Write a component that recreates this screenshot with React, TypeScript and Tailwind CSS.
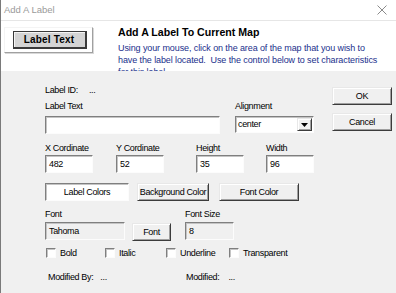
import { ReactNode } from 'react';

const sunken =
  'border border-t-[#7f7f7f] border-l-[#7f7f7f] border-r-[#fcfcfc] border-b-[#fcfcfc] shadow-[inset_1px_1px_0_#c4c4c4]';
const raised =
  'border border-t-[#e8e8e8] border-l-[#e8e8e8] border-r-[#3c3c3c] border-b-[#3c3c3c] bg-[#f0f0f0] shadow-[inset_1px_1px_0_#ffffff,inset_-1px_-1px_0_#a0a0a0]';

function Field({ value, className = '', bg = 'bg-white' }: { value?: string; className?: string; bg?: string }) {
  return (
    <div className={`${sunken} ${bg} h-[18px] flex items-center pl-[3px] ${className}`}>
      <span className="leading-none">{value}</span>
    </div>
  );
}

function Btn({ children, className = '' }: { children: ReactNode; className?: string }) {
  return (
    <div className={`${raised} h-[18px] flex items-center justify-center whitespace-nowrap ${className}`}>
      <span className="leading-none">{children}</span>
    </div>
  );
}

function Check({ label, className = '' }: { label: string; className?: string }) {
  return (
    <div className={`flex items-center ${className}`}>
      <div className={`${sunken} bg-white w-[10px] h-[10px]`} />
      <span className="ml-[4px] leading-none">{label}</span>
    </div>
  );
}

export default function App() {
  return (
    <div
      className="w-[396px] h-[293px] overflow-hidden bg-[#f0f0f0] border-l border-[#7a7a7a] text-[9px] tracking-[-0.35px] text-black flex flex-col"
      style={{ fontFamily: '"Liberation Sans", Arial, sans-serif' }}
    >
      {/* title bar */}
      <div className="h-[21px] bg-white flex items-center justify-between pl-[3px] pr-[8px] border-b border-[#e6e6e6] tracking-normal">
        <span className="text-[#9a9a9a] text-[9.5px]">Add A Label</span>
        <svg width="10" height="10" viewBox="0 0 10 10" className="mr-[1px]">
          <path d="M0.5 0.5L9.5 9.5M9.5 0.5L0.5 9.5" stroke="#8a8a8a" strokeWidth="1" />
        </svg>
      </div>

      {/* header */}
      <div className="h-[50px] bg-white flex overflow-hidden">
        <div className="w-[117px] pt-[6px] pl-[3px]">
          <div className="w-[89px] h-[26px] border border-t-[#f4f4f4] border-l-[#f4f4f4] border-r-[#a0a0a0] border-b-[#a0a0a0] shadow-[1px_1px_0_#d8d8d8] flex items-center justify-center">
            <div className="w-[74px] h-[18px] ml-[2px] bg-[#d4d4d4] border border-[#3a3a3a] border-r-2 border-b-2 shadow-[inset_1px_1px_0_#f4f4f4] flex items-center justify-center text-[10px] font-semibold tracking-[0.2px]">
              Label Text
            </div>
          </div>
        </div>
        <div className="flex-1 pt-[4px]">
          <div className="text-[10.6px] font-bold leading-[14px] tracking-normal">Add A Label To Current Map</div>
          <div className="text-[#1a2f8c] text-[9px] leading-[12px] mt-[3px] w-[263px] tracking-[-0.1px]">
            Using your mouse, click on the area of the map that you wish to have the label located.&nbsp; Use the control below to set characteristics for this label.
          </div>
        </div>
      </div>

      {/* body */}
      <div className="flex-1 flex">
        <div className="w-[331px] pl-[44px] pt-[14px]">
          <div className="flex h-[11px] items-center">
            <span>Label ID:</span>
            <span className="ml-[11px]">...</span>
          </div>

          <div className="flex mt-[5px]">
            <div className="w-[190px]">
              <div className="h-[11px] leading-[11px]">Label Text</div>
              <Field className="w-[175px] mt-[4px]" />
            </div>
            <div>
              <div className="h-[11px] leading-[11px]">Alignment</div>
              <div className={`${sunken} bg-white w-[79px] h-[17px] mt-[4px] flex items-center justify-between pl-[2px] pr-[1px]`}>
                <span className="leading-none">center</span>
                <div className={`${raised} w-[15px] h-[13px] flex items-center justify-center`}>
                  <svg width="7" height="4" viewBox="0 0 7 4">
                    <path d="M0 0H7L3.5 4Z" fill="#000" />
                  </svg>
                </div>
              </div>
            </div>
          </div>

          <div className="flex mt-[9px]">
            <div className="w-[71px]">
              <div className="h-[11px] leading-[11px]">X Cordinate</div>
              <Field value="482" className="w-[48px] mt-[1px]" />
            </div>
            <div className="w-[80px]">
              <div className="h-[11px] leading-[11px]">Y Cordinate</div>
              <Field value="52" className="w-[48px] mt-[1px]" />
            </div>
            <div className="w-[70px]">
              <div className="h-[11px] leading-[11px]">Height</div>
              <Field value="35" className="w-[48px] mt-[1px]" />
            </div>
            <div>
              <div className="h-[11px] leading-[11px]">Width</div>
              <Field value="96" className="w-[48px] mt-[1px]" />
            </div>
          </div>

          <div className="flex mt-[10px]">
            <div className={`${sunken} bg-white w-[84px] h-[18px] flex items-center justify-center`}>
              <span className="leading-none">Label Colors</span>
            </div>
            <Btn className="w-[72px] ml-[8px]">Background Color</Btn>
            <Btn className="w-[80px] ml-[10px]">Font Color</Btn>
          </div>

          <div className="flex mt-[8px]">
            <div className="w-[140px] flex">
              <div>
                <div className="h-[11px] leading-[11px]">Font</div>
                <Field value="Tahoma" bg="bg-[#f0f0f0]" className="w-[80px] mt-[2px]" />
              </div>
              <Btn className="w-[39px] ml-[7px] mt-[14px]">Font</Btn>
            </div>
            <div>
              <div className="h-[11px] leading-[11px]">Font Size</div>
              <Field value="8" bg="bg-[#f0f0f0]" className="w-[49px] mt-[2px]" />
            </div>
          </div>

          <div className="flex mt-[7px] h-[10px]">
            <Check label="Bold" className="w-[59px] ml-[1px]" />
            <Check label="Italic" className="w-[61px]" />
            <Check label="Underline" className="w-[63px]" />
            <Check label="Transparent" />
          </div>

          <div className="flex mt-[14px] h-[11px] items-center">
            <div className="w-[138px] flex ml-[3px]">
              <span>Modified By:</span>
              <span className="ml-[7px]">...</span>
            </div>
            <span>Modified:</span>
            <span className="ml-[9px]">...</span>
          </div>
        </div>

        <div className="pt-[16px] flex flex-col gap-[8px]">
          <Btn className="w-[60px]">OK</Btn>
          <Btn className="w-[60px]">Cancel</Btn>
        </div>
      </div>
    </div>
  );
}
